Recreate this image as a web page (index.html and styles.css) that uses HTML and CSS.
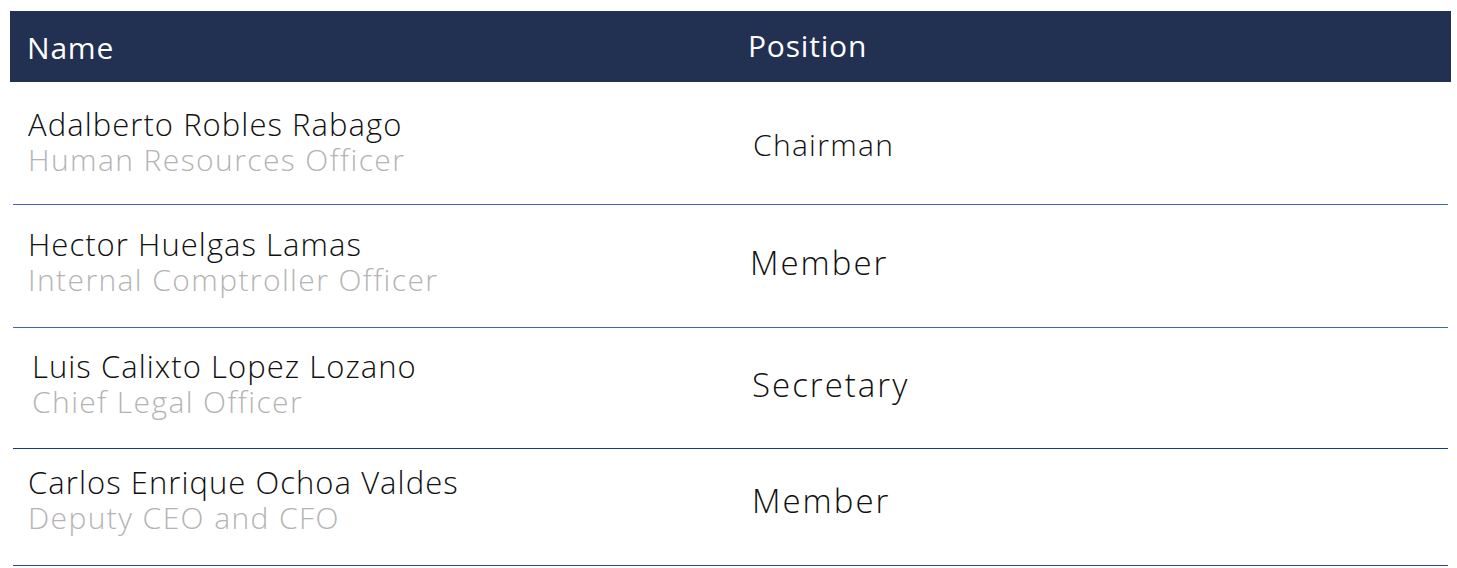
FILE: index.html
```html
<!DOCTYPE html>
<html lang="en">
<head>
<meta charset="utf-8">
<title>Committee</title>
<link rel="stylesheet" href="styles.css">
</head>
<body>
<div class="committee">
  <div class="head">
    <div class="col-name">Name</div>
    <div class="col-pos">Position</div>
  </div>
  <div class="body">
    <div class="row row-first">
      <div class="col-name">
        <div class="person">Adalberto Robles Rabago</div>
        <div class="role">Human Resources Officer</div>
      </div>
      <div class="col-pos pos-small">Chairman</div>
    </div>
    <div class="row">
      <div class="col-name">
        <div class="person">Hector Huelgas Lamas</div>
        <div class="role">Internal Comptroller Officer</div>
      </div>
      <div class="col-pos shift-left">Member</div>
    </div>
    <div class="row row-dark">
      <div class="col-name shift-right">
        <div class="person">Luis Calixto Lopez Lozano</div>
        <div class="role">Chief Legal Officer</div>
      </div>
      <div class="col-pos">Secretary</div>
    </div>
    <div class="row row-last">
      <div class="col-name">
        <div class="person">Carlos Enrique Ochoa Valdes</div>
        <div class="role">Deputy CEO and CFO</div>
      </div>
      <div class="col-pos">Member</div>
    </div>
  </div>
</div>
</body>
</html>
```
FILE: styles.css
```css
* { box-sizing: border-box; }
html, body { margin: 0; padding: 0; background: #ffffff; }
body {
  font-family: "Open Sans", "Liberation Sans", sans-serif;
  font-weight: 300;
  color: #111111;
}
.committee {
  padding: 11px 6px 0 10px;
}
.head {
  display: flex;
  align-items: center;
  height: 71px;
  background: #223052;
  color: #ffffff;
  font-size: 30px;
  font-weight: 400;
  letter-spacing: 0.8px;
}
.head .col-name { width: 738px; padding-left: 17px; padding-top: 1px; }
.head .col-pos { padding-left: 0; padding-bottom: 2px; }
.body {
  margin: 0 3px;
}
.row {
  display: flex;
  align-items: center;
  height: 123px;
  padding-bottom: 8px;
  border-bottom: 1px solid #3f64c0;
}
.row-first { padding-bottom: 3px; }
.row-dark { height: 121px; border-bottom-color: #12389f; }
.row-last { height: 117px; padding-bottom: 14px; border-bottom-color: #2848ae; }
.row .col-name {
  width: 737px;
  padding-left: 15px;
}
.row .col-name.shift-right { padding-left: 19px; }
.person {
  font-size: 31px;
  line-height: 36px;
  letter-spacing: 1.05px;
  color: #111111;
}
.role {
  font-size: 30px;
  line-height: 36px;
  letter-spacing: 1.4px;
  color: #b4b4b4;
}
.row .col-pos {
  font-size: 33px;
  letter-spacing: 2px;
  color: #111111;
  padding-left: 2px;
}
.row .col-pos.pos-small {
  font-size: 30px;
  letter-spacing: 1.3px;
  padding-left: 3px;
  padding-top: 6px;
}
.row .col-pos.shift-left { padding-left: 0; }
```
